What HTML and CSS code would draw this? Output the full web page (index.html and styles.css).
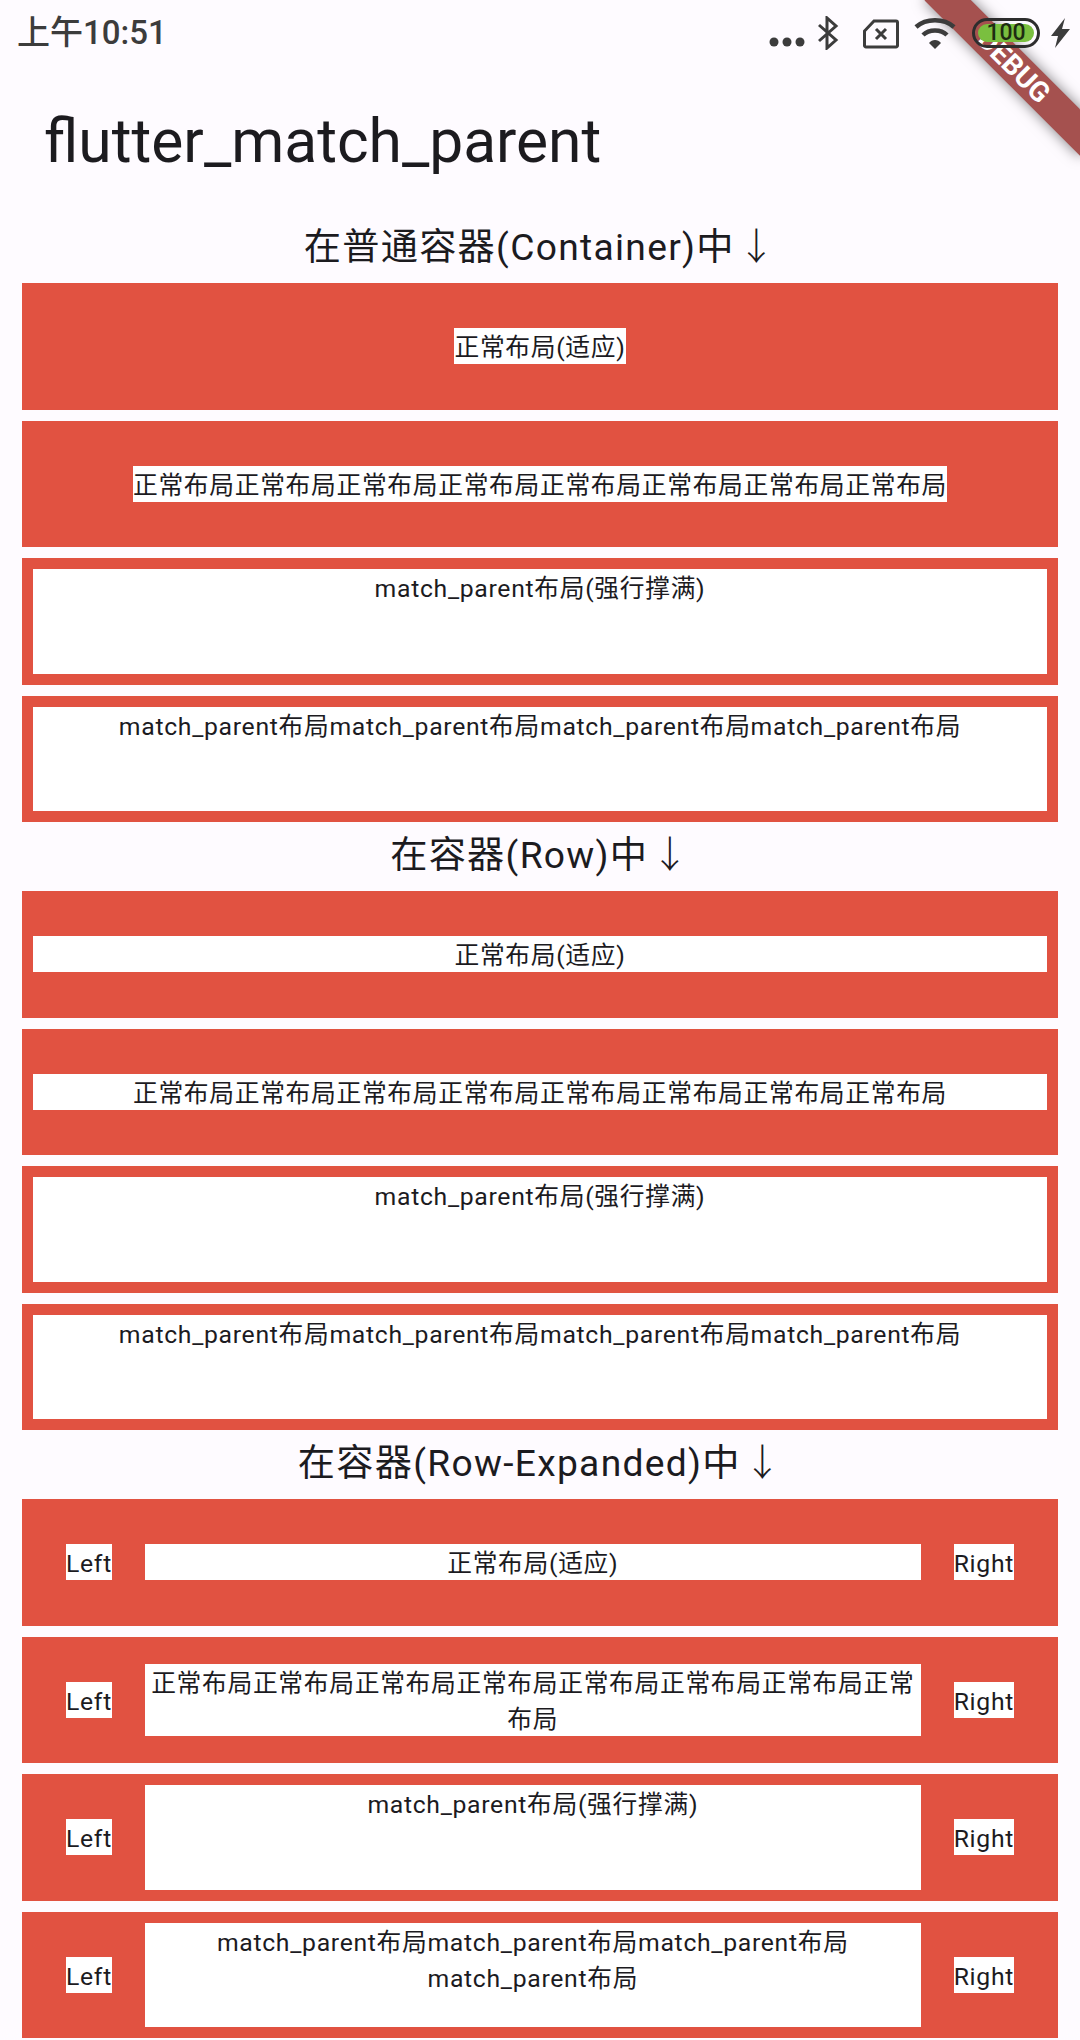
FILE: index.html
```html
<!DOCTYPE html>
<html>
<head>
    <meta charset="utf-8">
    <link rel="stylesheet" href="styles.css">
</head>
<body>
    <div class="debug-banner">DEBUG</div>

    <div class="status-bar">
        <span class="time">上午10:51</span>
        <div class="status-icons">
            <svg class="icon-dots" width="36" height="34" viewBox="0 0 36 34"><circle cx="5" cy="26" r="4.5"/><circle cx="18" cy="26" r="4.5"/><circle cx="31" cy="26" r="4.5"/></svg>
            <svg class="icon-bluetooth" width="22" height="34" viewBox="0 0 22 34"><path d="M2 9l17 15-9 8V2l9 8L2 25" fill="none" stroke-width="3"/></svg>
            <svg class="icon-sim" width="36" height="34" viewBox="0 0 36 34"><path d="M11 5h22a1.500 1.500 0 0 1 1.500 1.500v23a1.500 1.500 0 0 1-1.500 1.500H3a1.500 1.500 0 0 1-1.500-1.500V15z" fill="none" stroke-width="3"/><path d="M13 13l10 10M23 13L13 23" fill="none" stroke-width="3"/></svg>
            <svg class="icon-wifi" width="42" height="34" viewBox="0 0 42 34"><path d="M2 11C12 2 30 2 40 11" fill="none" stroke-width="4.500"/><path d="M9 19C15 13 27 13 33 19" fill="none" stroke-width="4.500"/><path d="M15 27c3-4 9-4 12 0l-6 6z"/></svg>
            <div class="battery"><div class="battery-fill">100</div></div>
            <svg class="icon-bolt" width="19" height="34" viewBox="0 0 19 34"><path d="M14 2L0 20h7L4 32 19 13h-8z"/></svg>
        </div>
    </div>

    <div class="app-bar">flutter_match_parent</div>

    <div class="heading">在普通容器(Container)中<span class="arrow">↓</span></div>
    <div class="box"><span class="tag">正常布局(适应)</span></div>
    <div class="box"><span class="tag">正常布局正常布局正常布局正常布局正常布局正常布局正常布局正常布局</span></div>
    <div class="box box-fill"><div class="fill">match_parent布局(强行撑满)</div></div>
    <div class="box box-fill"><div class="fill">match_parent布局match_parent布局match_parent布局match_parent布局</div></div>

    <div class="heading">在容器(Row)中<span class="arrow">↓</span></div>
    <div class="box box-row"><div class="wide">正常布局(适应)</div></div>
    <div class="box box-row"><div class="wide">正常布局正常布局正常布局正常布局正常布局正常布局正常布局正常布局</div></div>
    <div class="box box-fill"><div class="fill">match_parent布局(强行撑满)</div></div>
    <div class="box box-fill"><div class="fill">match_parent布局match_parent布局match_parent布局match_parent布局</div></div>

    <div class="heading">在容器(Row-Expanded)中<span class="arrow">↓</span></div>
    <div class="box box-row">
        <span class="tag side">Left</span>
        <div class="wide">正常布局(适应)</div>
        <span class="tag side">Right</span>
    </div>
    <div class="box box-row">
        <span class="tag side">Left</span>
        <div class="wide two-line">正常布局正常布局正常布局正常布局正常布局正常布局正常布局正常布局</div>
        <span class="tag side">Right</span>
    </div>
    <div class="box box-row">
        <span class="tag side">Left</span>
        <div class="wide stretch">match_parent布局(强行撑满)</div>
        <span class="tag side">Right</span>
    </div>
    <div class="box box-row">
        <span class="tag side">Left</span>
        <div class="wide stretch">match_parent布局match_parent布局match_parent布局match_parent布局</div>
        <span class="tag side">Right</span>
    </div>
</body>
</html>
```

FILE: styles.css
```css
* {
    box-sizing: border-box;
}
body {
    position: relative;
    display: flex;
    flex-direction: column;
    margin: 0;
    height: 2040px;
    overflow: hidden;
    background-color: #fefbff;
    color: #1c1b1f;
    font-family: Roboto, "Noto Sans CJK SC", sans-serif;
    font-size: 24.75px;
    letter-spacing: 0.69px;
    line-height: 36px;
}

/* status bar */
.status-bar {
    position: relative;
    z-index: 2;
    display: flex;
    flex-shrink: 0;
    justify-content: space-between;
    height: 66px;
    padding: 16px 10px 0 17px;
    letter-spacing: 0;
}
.time {
    color: #3c3c3c;
    font-size: 33px;
    font-weight: 500;
    line-height: 34px;
}
.status-icons {
    display: flex;
    align-items: flex-start;
}
.status-icons svg {
    fill: #3c3c3c;
    stroke: #3c3c3c;
    stroke-width: 0;
}
.icon-bluetooth {
    margin-left: 12px;
}
.icon-sim {
    margin-left: 24px;
}
.icon-wifi {
    margin-left: 15px;
}
.icon-bolt {
    margin-left: 11px;
}
.battery {
    width: 68px;
    height: 30px;
    margin: 2px 0 0 16px;
    padding: 3px;
    border: 3px solid #2d2d2d;
    border-radius: 15px;
}
.battery-fill {
    height: 18px;
    background-color: #7abf3f;
    border-radius: 9px;
    color: #1e2b12;
    font-size: 23px;
    font-weight: 500;
    line-height: 18px;
    text-align: center;
}

/* debug ribbon */
.debug-banner {
    position: absolute;
    z-index: 1;
    left: 904px;
    top: 49.5px;
    width: 220px;
    height: 33px;
    transform: rotate(45deg);
    background-color: #a5514f;
    box-shadow: 0 0 14px rgba(0, 0, 0, 0.5);
    color: #fff;
    font-size: 28px;
    font-weight: 700;
    letter-spacing: 0;
    line-height: 33px;
    text-align: center;
}

.app-bar {
    flex-shrink: 0;
    height: 153.5px;
    padding-left: 44px;
    font-size: 60.5px;
    letter-spacing: 0;
    line-height: 152px;
}
.heading {
    flex-shrink: 0;
    height: 58px;
    font-size: 37.2px;
    letter-spacing: 1.3px;
    line-height: 54px;
    text-align: center;
}
.arrow {
    margin-left: 3px;
    font-family: "Noto Sans CJK SC", sans-serif;
    font-weight: 300;
    line-height: 0;
}

/* red boxes */
.box {
    display: flex;
    flex-shrink: 0;
    align-items: center;
    justify-content: center;
    height: 126.5px;
    margin: 5.5px 22px;
    background-color: #e15241;
}
.tag,
.fill,
.wide {
    height: 36px;
    padding-top: 2px;
    background-color: #fff;
    text-align: center;
}
.tag {
    white-space: nowrap;
}
.side {
    margin: 0 33px;
}
.box-fill,
.box-row {
    padding: 11px;
}
.box-fill {
    align-items: stretch;
}
.fill,
.wide {
    flex: 1;
}
.fill,
.stretch {
    align-self: stretch;
    height: auto;
}
.two-line {
    height: 72px;
}
```
